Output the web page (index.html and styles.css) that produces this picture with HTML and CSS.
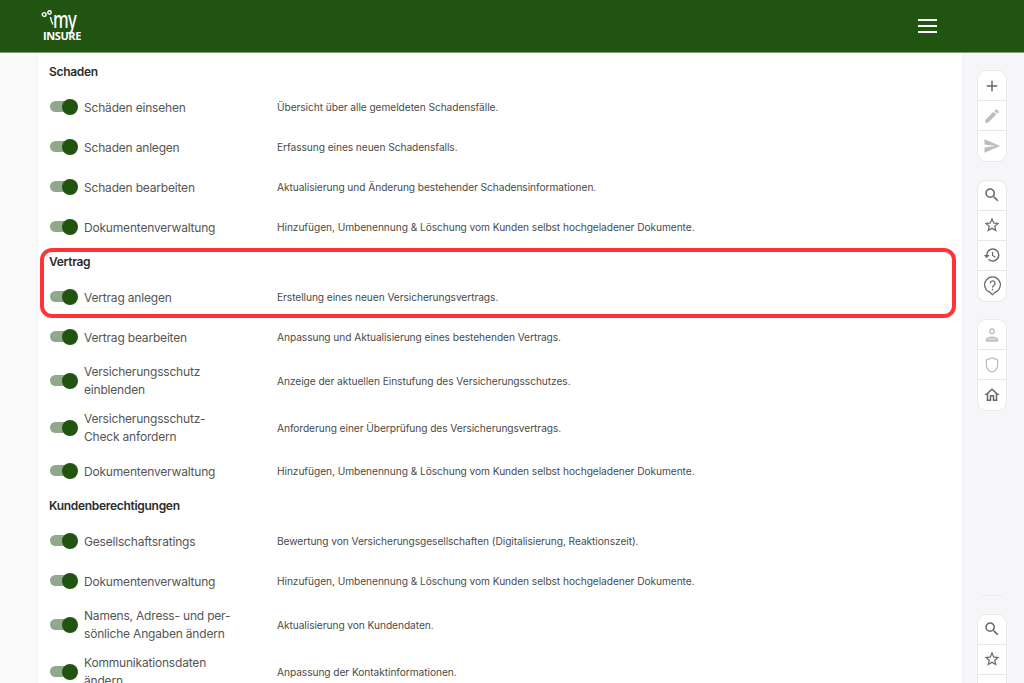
FILE: index.html
```html
<!DOCTYPE html>
<html lang="de">
<head>
<meta charset="utf-8">
<title>myINSURE</title>
<link rel="stylesheet" href="styles.css">
</head>
<body>
<header class="topbar">
  <div class="logo">
    <svg class="logo-flower" viewBox="0 0 16 16" width="16" height="16"><circle cx="3.200" cy="4.500" r="1.900"/><circle cx="8.500" cy="2.500" r="1.700"/><path d="M9.500 7c.3 2.500 1 5 2.500 7.500"/></svg>
    <span class="logo-my">my</span>
    <span class="logo-insure">INSURE</span>
  </div>
  <button class="burger" aria-label="Menü"><span></span><span></span><span></span></button>
</header>
<div class="shell">
  <div class="gutter"></div>
  <main class="content">
    <h2 class="section">Schaden</h2>
    <div class="row"><span class="toggle"></span><span class="label">Schäden einsehen</span><span class="desc">Übersicht über alle gemeldeten Schadensfälle.</span></div>
    <div class="row"><span class="toggle"></span><span class="label">Schaden anlegen</span><span class="desc">Erfassung eines neuen Schadensfalls.</span></div>
    <div class="row"><span class="toggle"></span><span class="label">Schaden bearbeiten</span><span class="desc">Aktualisierung und Änderung bestehender Schadensinformationen.</span></div>
    <div class="row"><span class="toggle"></span><span class="label">Dokumentenverwaltung</span><span class="desc">Hinzufügen, Umbenennung &amp; Löschung vom Kunden selbst hochgeladener Dokumente.</span></div>
    <h2 class="section">Vertrag</h2>
    <div class="row"><span class="toggle"></span><span class="label">Vertrag anlegen</span><span class="desc">Erstellung eines neuen Versicherungsvertrags.</span></div>
    <div class="row"><span class="toggle"></span><span class="label">Vertrag bearbeiten</span><span class="desc">Anpassung und Aktualisierung eines bestehenden Vertrags.</span></div>
    <div class="row"><span class="toggle"></span><span class="label">Versicherungsschutz<br>einblenden</span><span class="desc">Anzeige der aktuellen Einstufung des Versicherungsschutzes.</span></div>
    <div class="row"><span class="toggle"></span><span class="label">Versicherungsschutz-<br>Check anfordern</span><span class="desc">Anforderung einer Überprüfung des Versicherungsvertrags.</span></div>
    <div class="row"><span class="toggle"></span><span class="label">Dokumentenverwaltung</span><span class="desc">Hinzufügen, Umbenennung &amp; Löschung vom Kunden selbst hochgeladener Dokumente.</span></div>
    <h2 class="section">Kundenberechtigungen</h2>
    <div class="row"><span class="toggle"></span><span class="label">Gesellschaftsratings</span><span class="desc">Bewertung von Versicherungsgesellschaften (Digitalisierung, Reaktionszeit).</span></div>
    <div class="row"><span class="toggle"></span><span class="label">Dokumentenverwaltung</span><span class="desc">Hinzufügen, Umbenennung &amp; Löschung vom Kunden selbst hochgeladener Dokumente.</span></div>
    <div class="row"><span class="toggle"></span><span class="label">Namens, Adress- und per-<br>sönliche Angaben ändern</span><span class="desc">Aktualisierung von Kundendaten.</span></div>
    <div class="row"><span class="toggle"></span><span class="label">Kommunikationsdaten<br>ändern</span><span class="desc">Anpassung der Kontaktinformationen.</span></div>
    <div class="highlight"></div>
  </main>
  <aside class="rail">
    <div class="group">
      <button class="tool"><svg viewBox="0 0 24 24"><path d="M19 13h-6v6h-2v-6H5v-2h6V5h2v6h6v2z"/></svg></button>
      <button class="tool off"><svg viewBox="0 0 24 24"><path d="M3 17.25V21h3.75L17.81 9.94l-3.75-3.75L3 17.25zM20.71 7.04a1 1 0 0 0 0-1.41l-2.34-2.34a1 1 0 0 0-1.41 0l-1.83 1.83 3.75 3.75 1.83-1.83z"/></svg></button>
      <button class="tool off"><svg viewBox="0 0 24 24"><path d="M2.01 21L23 12 2.01 3 2 10l15 2-15 2z"/></svg></button>
    </div>
    <div class="group">
      <button class="tool"><svg viewBox="0 0 24 24"><path d="M15.5 14h-.79l-.28-.27A6.471 6.471 0 0 0 16 9.5 6.5 6.5 0 1 0 9.5 16c1.61 0 3.09-.59 4.23-1.57l.27.28v.79l5 4.99L20.49 19l-4.99-5zm-6 0C7.01 14 5 11.99 5 9.5S7.01 5 9.5 5 14 7.01 14 9.5 11.99 14 9.5 14z"/></svg></button>
      <button class="tool"><svg viewBox="0 0 24 24"><path d="M22 9.24l-7.19-.62L12 2 9.19 8.63 2 9.24l5.46 4.73L5.82 21 12 17.27 18.18 21l-1.63-7.03L22 9.24zM12 15.4l-3.76 2.27 1-4.28-3.32-2.88 4.38-.38L12 6.1l1.71 4.04 4.38.38-3.32 2.88 1 4.28L12 15.4z"/></svg></button>
      <button class="tool"><svg viewBox="0 0 24 24"><path d="M13 3a9 9 0 0 0-9 9H1l3.89 3.89.07.14L9 12H6c0-3.87 3.13-7 7-7s7 3.13 7 7-3.13 7-7 7c-1.93 0-3.68-.79-4.94-2.06l-1.42 1.42A8.954 8.954 0 0 0 13 21a9 9 0 0 0 0-18zm-1 5v5l4.28 2.54.72-1.21-3.5-2.08V8H12z"/></svg></button>
      <button class="tool"><svg class="line big" viewBox="0 0 24 24"><path d="M12 22.500l-3.300-2.900A9 9 0 1 1 15.300 19.600z"/><path d="M9.300 9.500a2.800 2.800 0 1 1 4.200 2.500c-1.100.6-1.500 1.200-1.500 2.400"/><path d="M12 15.800v1.700"/></svg></button>
    </div>
    <div class="group">
      <button class="tool off"><svg class="line" viewBox="0 0 24 24"><circle cx="12" cy="7" r="3"/><path d="M4.500 20v-1.500c0-2.500 4.500-3.700 7.500-3.700s7.500 1.200 7.500 3.700V20z" class="solid"/></svg></button>
      <button class="tool off"><svg class="line" viewBox="0 0 24 24"><path d="M12 2.500l7.500 2.800v6.200c0 4.800-3 8.500-7.500 10-4.500-1.500-7.500-5.200-7.500-10V5.300z"/></svg></button>
      <button class="tool"><svg viewBox="0 0 24 24"><path d="M12 5.690l5 4.500V18h-2v-6H9v6H7v-7.810l5-4.500M12 3L2 12h3v8h6v-6h2v6h6v-8h3L12 3z"/></svg></button>
    </div>
    <div class="rule"></div>
    <div class="group">
      <button class="tool"><svg viewBox="0 0 24 24"><path d="M15.5 14h-.79l-.28-.27A6.471 6.471 0 0 0 16 9.5 6.5 6.5 0 1 0 9.5 16c1.61 0 3.09-.59 4.23-1.57l.27.28v.79l5 4.99L20.49 19l-4.99-5zm-6 0C7.01 14 5 11.99 5 9.5S7.01 5 9.5 5 14 7.01 14 9.5 11.99 14 9.5 14z"/></svg></button>
      <button class="tool"><svg viewBox="0 0 24 24"><path d="M22 9.24l-7.19-.62L12 2 9.19 8.63 2 9.24l5.46 4.73L5.82 21 12 17.27 18.18 21l-1.63-7.03L22 9.24zM12 15.4l-3.76 2.27 1-4.28-3.32-2.88 4.38-.38L12 6.1l1.71 4.04 4.38.38-3.32 2.88 1 4.28L12 15.4z"/></svg></button>
      <button class="tool"><svg viewBox="0 0 24 24"><path d="M13 3a9 9 0 0 0-9 9H1l3.89 3.89.07.14L9 12H6c0-3.87 3.13-7 7-7s7 3.13 7 7-3.13 7-7 7c-1.93 0-3.68-.79-4.94-2.06l-1.42 1.42A8.954 8.954 0 0 0 13 21a9 9 0 0 0 0-18zm-1 5v5l4.28 2.54.72-1.21-3.5-2.08V8H12z"/></svg></button>
    </div>
  </aside>
</div>
</body>
</html>
```
FILE: styles.css
```css
* { box-sizing: border-box; }
html, body { height: 100%; }
body {
  margin: 0;
  height: 683px;
  overflow: hidden;
  display: flex;
  flex-direction: column;
  font-family: Inter, "Noto Sans", "Liberation Sans", sans-serif;
  color: #4c4c4c;
  background: #fff;
}
.topbar {
  flex: 0 0 53px;
  display: flex;
  align-items: center;
  justify-content: space-between;
  background: #215411;
  border-bottom: 1px solid #7f9a76;
  padding: 0 87px 0 41px;
}
.logo {
  width: 42px;
  height: 32px;
  position: relative;
  margin-top: -2px;
  color: #fff;
}
.logo-flower { position: absolute; left: 0; top: 1px; fill: none; stroke: #fff; stroke-width: 1.4; }
.logo-my {
  position: absolute;
  left: 12px;
  top: 0;
  font: 500 23px/20px "Noto Sans", sans-serif;
  letter-spacing: -1px;
  transform: scaleX(0.72);
  transform-origin: left top;
}
.logo-insure {
  position: absolute;
  left: 2px;
  top: 20px;
  font: 700 11px/13px "Open Sans", sans-serif;
  letter-spacing: -0.4px;
}
.burger {
  width: 19px;
  height: 14px;
  padding: 0;
  border: 0;
  background: none;
  display: flex;
  flex-direction: column;
  justify-content: space-between;
}
.burger span { display: block; height: 2px; background: #fff; }
.shell { flex: 1; display: flex; min-height: 0; }
.gutter { flex: 0 0 38px; background: #fafafa; border-right: 1px solid #f1f1f2; }
.content {
  flex: 1;
  position: relative;
  padding: 4px 0 0 11px;
  background: #fff;
  overflow: hidden;
}
.section {
  margin: 0;
  height: 30px;
  padding-bottom: 1px;
  display: flex;
  align-items: center;
  font-size: 12px;
  font-weight: 600;
  color: #2c2c2c;
  letter-spacing: -0.3px;
}
.row {
  display: grid;
  grid-template-columns: 35px 193px 1fr;
  align-items: center;
  min-height: 40px;
  padding: 5px 0;
}
.toggle {
  width: 29px;
  height: 16px;
  position: relative;
  display: block;
}
.toggle::before {
  content: "";
  position: absolute;
  left: 1px;
  top: 2px;
  width: 26px;
  height: 11px;
  border-radius: 6px;
  background: #8fa98a;
}
.toggle::after {
  content: "";
  position: absolute;
  left: 13px;
  top: 0;
  width: 16px;
  height: 16px;
  border-radius: 50%;
  background: #215411;
}
.label { font-size: 12px; line-height: 18px; padding-top: 1px; color: #555; letter-spacing: -0.19px; }
.desc { font-size: 10.2px; line-height: 16px; color: #4a4a4a; letter-spacing: -0.07px; }
.highlight {
  position: absolute;
  left: 2px;
  top: 195px;
  width: 916px;
  height: 70px;
  border: 4px solid #ff3338;
  border-radius: 12px;
}
.rail {
  flex: 0 0 62px;
  background: #f6f6f8;
  border-left: 1px solid #f0f0f2;
  padding: 17px 0 0 14px;
  display: flex;
  flex-direction: column;
  overflow: hidden;
}
.group {
  flex: none;
  width: 30px;
  margin-bottom: 17.5px;
  background: #fff;
  border: 1px solid #e8e8ee;
  border-radius: 9px;
  overflow: hidden;
}
.tool {
  display: flex;
  align-items: center;
  justify-content: center;
  width: 100%;
  height: 30px;
  padding: 0;
  border: 0;
  border-bottom: 1px solid #e8e8ee;
  background: none;
}
.tool:last-child { border-bottom: 0; }
.tool svg { width: 18px; height: 18px; fill: #666; }
.tool svg.line { fill: none; stroke: #666; stroke-width: 1.7; }
.tool svg.big { width: 21px; height: 21px; stroke-width: 1.4; }
.tool.off svg { fill: #bdbdbd; }
.tool.off svg.line { fill: none; stroke: #bdbdbd; }
.tool.off svg.line .solid { fill: #d4d4d4; }
.rule {
  flex: none;
  width: 22px;
  height: 1px;
  margin: 166.5px 0 17.5px 4px;
  background: #ececef;
}
```
